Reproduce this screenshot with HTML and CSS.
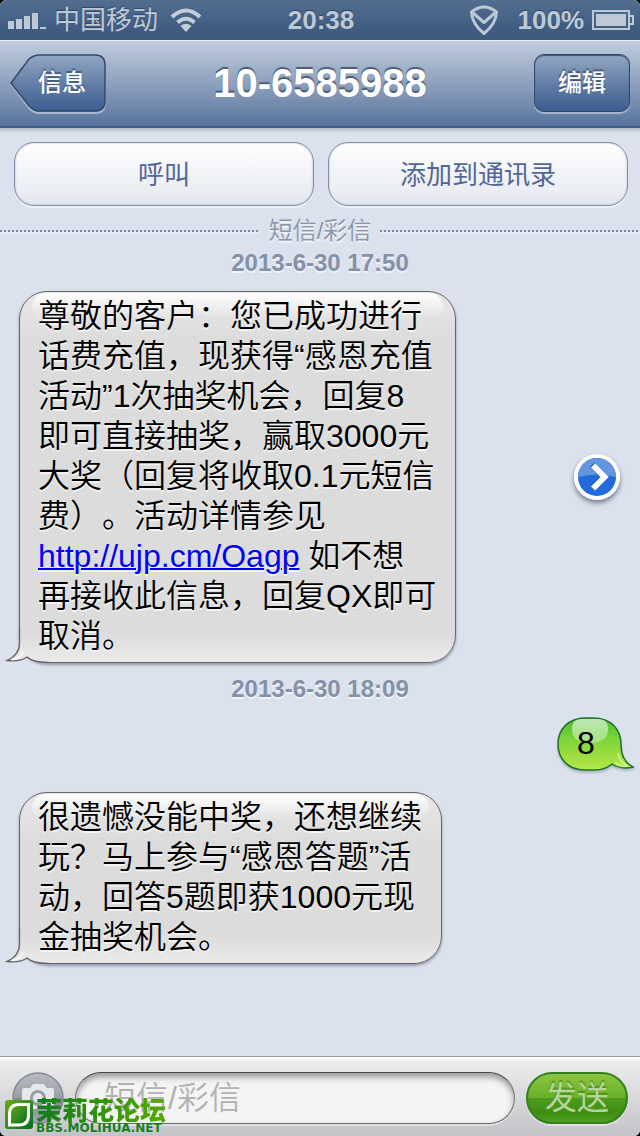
FILE: index.html
```html
<!DOCTYPE html>
<html lang="zh-CN">
<head>
<meta charset="utf-8">
<meta name="viewport" content="width=device-width, initial-scale=1">
<title>10-6585988</title>
<link rel="stylesheet" href="styles.css">
</head>
<body>
<div class="screen">
  <div class="status">
    <div class="status-side">
      <svg class="signal" width="38" height="16" viewBox="0 0 38 16" aria-hidden="true"><path d="M0 8h6v8H0zM8 6h6v10H8zM16 3h6v13h-6zM24 0h6v16h-6zM32 14h6v2h-6z" fill="#bec9d6"/></svg>
      <span>中国移动</span>
      <svg class="wifi" width="32" height="24" viewBox="0 0 32 24" aria-hidden="true"><g fill="none" stroke="#c4ceda" stroke-width="4"><path d="M2 9Q16 -4 30 9"/><path d="M7.500 14.500Q16 7 24.500 14.500"/></g><path d="M10.500 18Q16 13.500 21.500 18L16 24z" fill="#c4ceda"/></svg>
    </div>
    <time class="clock">20:38</time>
    <div class="status-side status-right">
      <svg class="shield" width="28" height="30" viewBox="0 0 28 30" aria-hidden="true"><g fill="none" stroke="#bec9d6" stroke-width="3" stroke-linejoin="round"><path d="M1.500 7Q14 -3 26.500 7Q26 19 14 28.500Q2 19 1.500 7z"/><path d="M2 7L14 17.500L26 7"/></g></svg>
      <span class="percent">100%</span>
      <svg width="42" height="20" viewBox="0 0 42 20" aria-hidden="true"><path d="M1 1h36v18H1zM37 6h4v8h-4" fill="none" stroke="#bec9d6" stroke-width="2"/><path d="M4 4h30v12H4z" fill="#bec9d6"/></svg>
    </div>
  </div>

  <header class="nav">
    <button class="nav-button back" type="button">
      <svg class="back-shape" width="98" height="62" viewBox="0 0 98 62" aria-hidden="true">
        <defs><linearGradient id="back" x1="0" y1="0" x2="0" y2="1"><stop offset="0" stop-color="#94a7c3"/><stop offset=".5" stop-color="#6580a8"/><stop offset="1" stop-color="#3c5d90"/></linearGradient></defs>
        <path d="M1 30L19 7Q24 2 29 2H85Q95 2 95 12V49Q95 59 85 59H29Q24 59 19 54z" fill="none" stroke="#a9b8cf" stroke-width="2"/>
        <path d="M1 29L19 5Q24 1 29 1H85Q95 1 95 11V47Q95 57 85 57H29Q24 57 19 52z" fill="url(#back)" stroke="#344968" stroke-width="1.500"/>
      </svg>
      <span>信息</span>
    </button>
    <h1>10-6585988</h1>
    <button class="nav-button edit" type="button">编辑</button>
  </header>

  <main class="conversation">
    <div class="actions">
      <button type="button">呼叫</button>
      <button type="button">添加到通讯录</button>
    </div>
    <div class="divider"><span>短信/彩信</span></div>

    <time class="date">2013-6-30 17:50</time>
    <div class="row">
      <div class="bubble">
        <svg class="tail" width="44" height="36" viewBox="0 0 44 36" aria-hidden="true">
          <defs><linearGradient id="tail" x1="0" y1="0" x2="0" y2="1"><stop offset=".2" stop-color="#dcdcdc"/><stop offset="1" stop-color="#eaeaea"/></linearGradient></defs>
          <path d="M15 0V16Q15 28 2 33.500Q15 35 22 30Q28 34.500 42 34.500V0z" fill="url(#tail)"/><path d="M14.500 0V16Q14.500 28 2 33.500Q15 35 22 30Q28 35.500 44 35.500" fill="none" stroke="#666" stroke-width="1.300"/><path d="M7 32.500Q16 31 18 24" fill="none" stroke="#fff" stroke-width="2" opacity=".7"/>
        </svg>
        <p>尊敬的客户：您已成功进行<br>话费充值，现获得“感恩充值<br>活动”1次抽奖机会，回复8<br>即可直接抽奖，赢取3000元<br>大奖（回复将收取0.1元短信<br>费）。活动详情参见<br><a href="#link">http://ujp.cm/Oagp</a> 如不想<br>再接收此信息，回复QX即可<br>取消。</p>
      </div>
      <button class="forward" type="button" aria-label="详情">
        <svg width="46" height="46" viewBox="0 0 46 46" aria-hidden="true"><circle cx="23" cy="23" r="23" fill="#fff"/><circle cx="23" cy="23" r="19" fill="#216bdc"/><path d="M4 23A19 19 0 0 1 42 23Q23 18 4 23z" fill="#6496df"/><path d="M18 11L29.500 22.500L18 34" fill="none" stroke="#1751ad" stroke-width="6"/><path d="M19 11.500L30.500 23L19 34.500" fill="none" stroke="#fff" stroke-width="6"/></svg>
      </button>
    </div>

    <time class="date">2013-6-30 18:09</time>
    <div class="row row-sent">
      <div class="sent">
        <svg class="sent-shape" width="78" height="56" viewBox="0 0 78 56" aria-hidden="true">
          <defs>
            <linearGradient id="green" x1="0" y1="0" x2="0" y2="1"><stop offset="0" stop-color="#46bd32"/><stop offset=".35" stop-color="#76d33a"/><stop offset=".7" stop-color="#9cdc3e"/><stop offset="1" stop-color="#b4e94b"/></linearGradient>
            <linearGradient id="shine" x1="0" y1="0" x2="0" y2="1"><stop offset="0" stop-color="#fff" stop-opacity=".65"/><stop offset="1" stop-color="#fff" stop-opacity=".3"/></linearGradient>
          </defs>
          <path d="M28 1H36C54 1 64 12 64 28C64 39 68 46 76 50Q64 53 55 47Q48 53 38 53H28C11 53 1 42 1 27C1 12 12 1 28 1z" fill="url(#green)" stroke="#20712d" stroke-width="1.500"/>
          <path d="M24 2H42Q51 2 51 12Q51 26 33 26Q15 26 15 12Q15 2 24 2z" fill="url(#shine)"/>
          <path d="M61 36Q63 46 71 49Q63 50 58 45" fill="none" stroke="#dff7a2" stroke-width="1.500" opacity=".8"/>
        </svg>
        <p>8</p>
      </div>
    </div>

    <div class="row">
      <div class="bubble">
        <svg class="tail" width="44" height="36" viewBox="0 0 44 36" aria-hidden="true"><path d="M15 0V16Q15 28 2 33.500Q15 35 22 30Q28 34.500 42 34.500V0z" fill="url(#tail)"/><path d="M14.500 0V16Q14.500 28 2 33.500Q15 35 22 30Q28 35.500 44 35.500" fill="none" stroke="#666" stroke-width="1.300"/><path d="M7 32.500Q16 31 18 24" fill="none" stroke="#fff" stroke-width="2" opacity=".7"/></svg>
        <p>很遗憾没能中奖，还想继续<br>玩？马上参与“感恩答题”活<br>动，回答5题即获1000元现<br>金抽奖机会。</p>
      </div>
    </div>
  </main>

  <footer class="composer">
    <button class="camera" type="button" aria-label="相机">
      <svg width="52" height="52" viewBox="0 0 52 52" aria-hidden="true">
        <defs><linearGradient id="cam" x1="0" y1="0" x2="0" y2="1"><stop offset="0" stop-color="#b7bbc1"/><stop offset=".5" stop-color="#9a9fa8"/><stop offset=".5" stop-color="#858b96"/><stop offset="1" stop-color="#a0a5ad"/></linearGradient></defs>
        <circle cx="26" cy="26" r="25" fill="url(#cam)" stroke="#858a92" stroke-width="1.500"/>
        <path d="M12 16H18L21 12H32L35 16H40Q42 16 42 18V35Q42 37 40 37H12Q10 37 10 35V18Q10 16 12 16z" fill="#e5e7ea"/>
        <circle cx="26" cy="26" r="6.500" fill="#e5e7ea" stroke="#989da6" stroke-width="3"/>
      </svg>
    </button>
    <input class="message" type="text" placeholder="短信/彩信" aria-label="短信/彩信">
    <button class="send" type="button">发送</button>
    <div class="watermark">
      <svg width="28" height="30" viewBox="0 0 28 30" aria-hidden="true">
        <defs><linearGradient id="leaf" x1="0" y1="0" x2="1" y2="1"><stop offset="0" stop-color="#69ad10"/><stop offset="1" stop-color="#006b25"/></linearGradient></defs>
        <rect width="28" height="29" rx="3" fill="url(#leaf)"/>
        <path d="M4.500 25V14Q4.500 4.500 14 4.500H23.500V15Q23.500 25 14 25z" fill="url(#leaf)" stroke="#fff" stroke-width="3"/>
      </svg>
      <div class="forum"><span class="forum-name">茉莉花论坛</span><span class="forum-url">BBS.MOLIHUA.NET</span></div>
    </div>
  </footer>
</div>
</body>
</html>
```

FILE: styles.css
```css
* { box-sizing: border-box; }
body { margin: 0; background: #000; font-family: "Liberation Sans", "Noto Sans CJK SC", sans-serif; text-spacing-trim: space-all; }
h1, p { margin: 0; }
svg { display: block; flex: none; }
button { padding: 0; border: 0; background: none; font: inherit; color: inherit; }

.screen { min-height: 100vh; display: flex; flex-direction: column; border-radius: 6px; overflow: hidden; background: #dbe1ed; }

.status { height: 40px; padding: 0 6px 0 8px; display: grid; grid-template-columns: 1fr auto 1fr; align-items: center; background: linear-gradient(#526d8f, #3e5b80 80%); color: #bec9d6; font-size: 26px; line-height: 40px; text-shadow: 0 -1px 1px #2f4768; }
.status-side { display: flex; align-items: center; gap: 8px; }
.status-right { justify-content: flex-end; }
.signal { margin-top: 2px; }
.wifi { margin-left: 4px; }
.shield { margin-right: 12px; }
.clock, .percent { font-weight: bold; }

.nav { height: 88px; padding: 0 10px 2px; display: grid; grid-template-columns: 1fr auto 1fr; align-items: center; background: linear-gradient(#c0cddd, #8498b8 60%, #56749b); border-top: 1px solid #edf1f6; border-bottom: 2px solid #405e88; color: #fff; text-shadow: 0 -2px 1px #4a5a72; }
.nav h1 { font-size: 40px; line-height: 48px; }
.nav-button { height: 58px; font-size: 24px; font-weight: 500; line-height: 58px; text-shadow: 0 -2px 1px #41597f; }
.back { position: relative; width: 98px; padding-left: 6px; justify-self: start; }
.back-shape { position: absolute; left: 0; top: 0; }
.back span { position: relative; }
.edit { width: 96px; justify-self: end; border: 1px solid #344968; border-radius: 10px; line-height: 56px; background: linear-gradient(#94a7c3, #6580a8 50%, #3c5d90); box-shadow: 0 2px 1px #a9b8cf, inset 0 1px 1px #42536d; }

.conversation { flex: 1; padding-top: 14px; background: linear-gradient(#b4bbc8, #dbe1ed 5px); }
.actions { display: grid; grid-template-columns: 1fr 1fr; gap: 14px; padding: 0 12px 0 14px; }
.actions button { height: 64px; padding-bottom: 3px; border: 1px solid #8491a8; border-radius: 20px; background: linear-gradient(#fff, #e4e8ef); box-shadow: 0 2px 0 #edf1f8, inset 0 0 2px #9aa6ba; color: #536796; font-size: 26px; }
.divider { margin-top: 9px; display: flex; align-items: center; gap: 9px; color: #8b96aa; font-size: 24px; font-weight: 350; line-height: 32px; text-shadow: 0 2px 0 #f0f4fa; }
.divider::before, .divider::after { content: ""; flex: 1; height: 2px; background: repeating-linear-gradient(90deg, #808a9c 0 2px, #dbe1ed 2px 4px); box-shadow: 0 2px 0 #e8edf5; }
.date { display: block; margin-bottom: 12px; text-align: center; color: #8491a8; font-size: 24px; font-weight: bold; line-height: 32px; text-shadow: 0 2px 0 #f0f4fa; }

.row { display: flex; align-items: center; justify-content: space-between; margin-bottom: 10px; padding: 0 20px 0 19px; }
.bubble { position: relative; padding: 4px 19px 6px 18px; border: 1px solid #666; border-radius: 28px; background: linear-gradient(#e8e8e8, #dcdcdc 48px, #dcdcdc calc(100% - 28px), #eaeaea); box-shadow: 0 2px 3px #9299a6; color: #000; font-size: 32px; font-weight: 350; line-height: 40px; text-shadow: 0 2px 0 #f2f2f2; }
.bubble::before { content: ""; position: absolute; left: 12px; right: 12px; top: 1px; height: 24px; border-radius: 18px 18px 12px 12px; background: linear-gradient(#fff, #e3e3e3); }
.bubble p { position: relative; }
.bubble a { color: #00f; text-decoration-thickness: 2px; }
.tail { position: absolute; left: -15px; bottom: -1px; }
.forward { border-radius: 50%; box-shadow: 0 3px 5px #70798a; }
.row-sent { justify-content: flex-end; padding-right: 5px; margin-bottom: 21px; }
.sent { position: relative; width: 78px; height: 54px; padding-right: 20px; text-align: center; font-size: 32px; line-height: 52px; }
.sent-shape { position: absolute; left: 0; top: 0; filter: drop-shadow(0 2px 1px #abb4c2); }
.sent p { position: relative; }

.composer { position: relative; display: flex; align-items: center; gap: 11px; padding: 15px 12px 12px; border-top: 1px solid #999ca1; background: linear-gradient(#fff 2px, #ededee 3px, #c3c4c8); }
.message { flex: 1; min-width: 0; height: 52px; padding: 0 28px; border: 1px solid #6d6d6d; border-top-color: #484848; border-radius: 26px; background: #f4f4f4; box-shadow: inset 0 4px 6px #999, 0 2px 0 #dedfe2; font: 350 32px "Liberation Sans", "Noto Sans CJK SC", sans-serif; }
.message::placeholder { color: #b2b2b2; opacity: 1; }
.send { width: 102px; height: 52px; border: 2px solid #32811b; border-radius: 26px; background: linear-gradient(#8cc541, #68b02a 50%, #4d9d1c 50%, #3f8c14 80%, #50a021); box-shadow: 0 2px 0 #dedfe2; color: #b4d59b; font-size: 32px; line-height: 48px; text-shadow: 0 -2px 1px #539421; }
.watermark { position: absolute; left: 5px; bottom: 4px; display: flex; align-items: center; gap: 3px; color: #3b9211; }
.forum { display: flex; flex-direction: column; }
.forum-name { font-size: 26px; font-weight: 900; line-height: 26px; background: linear-gradient(90deg, #117d1c, #55a900); background-clip: text; color: transparent; }
.forum-url { font-family: "DejaVu Sans", sans-serif; font-size: 12px; font-weight: bold; line-height: 8px; color: #168121; }
```
